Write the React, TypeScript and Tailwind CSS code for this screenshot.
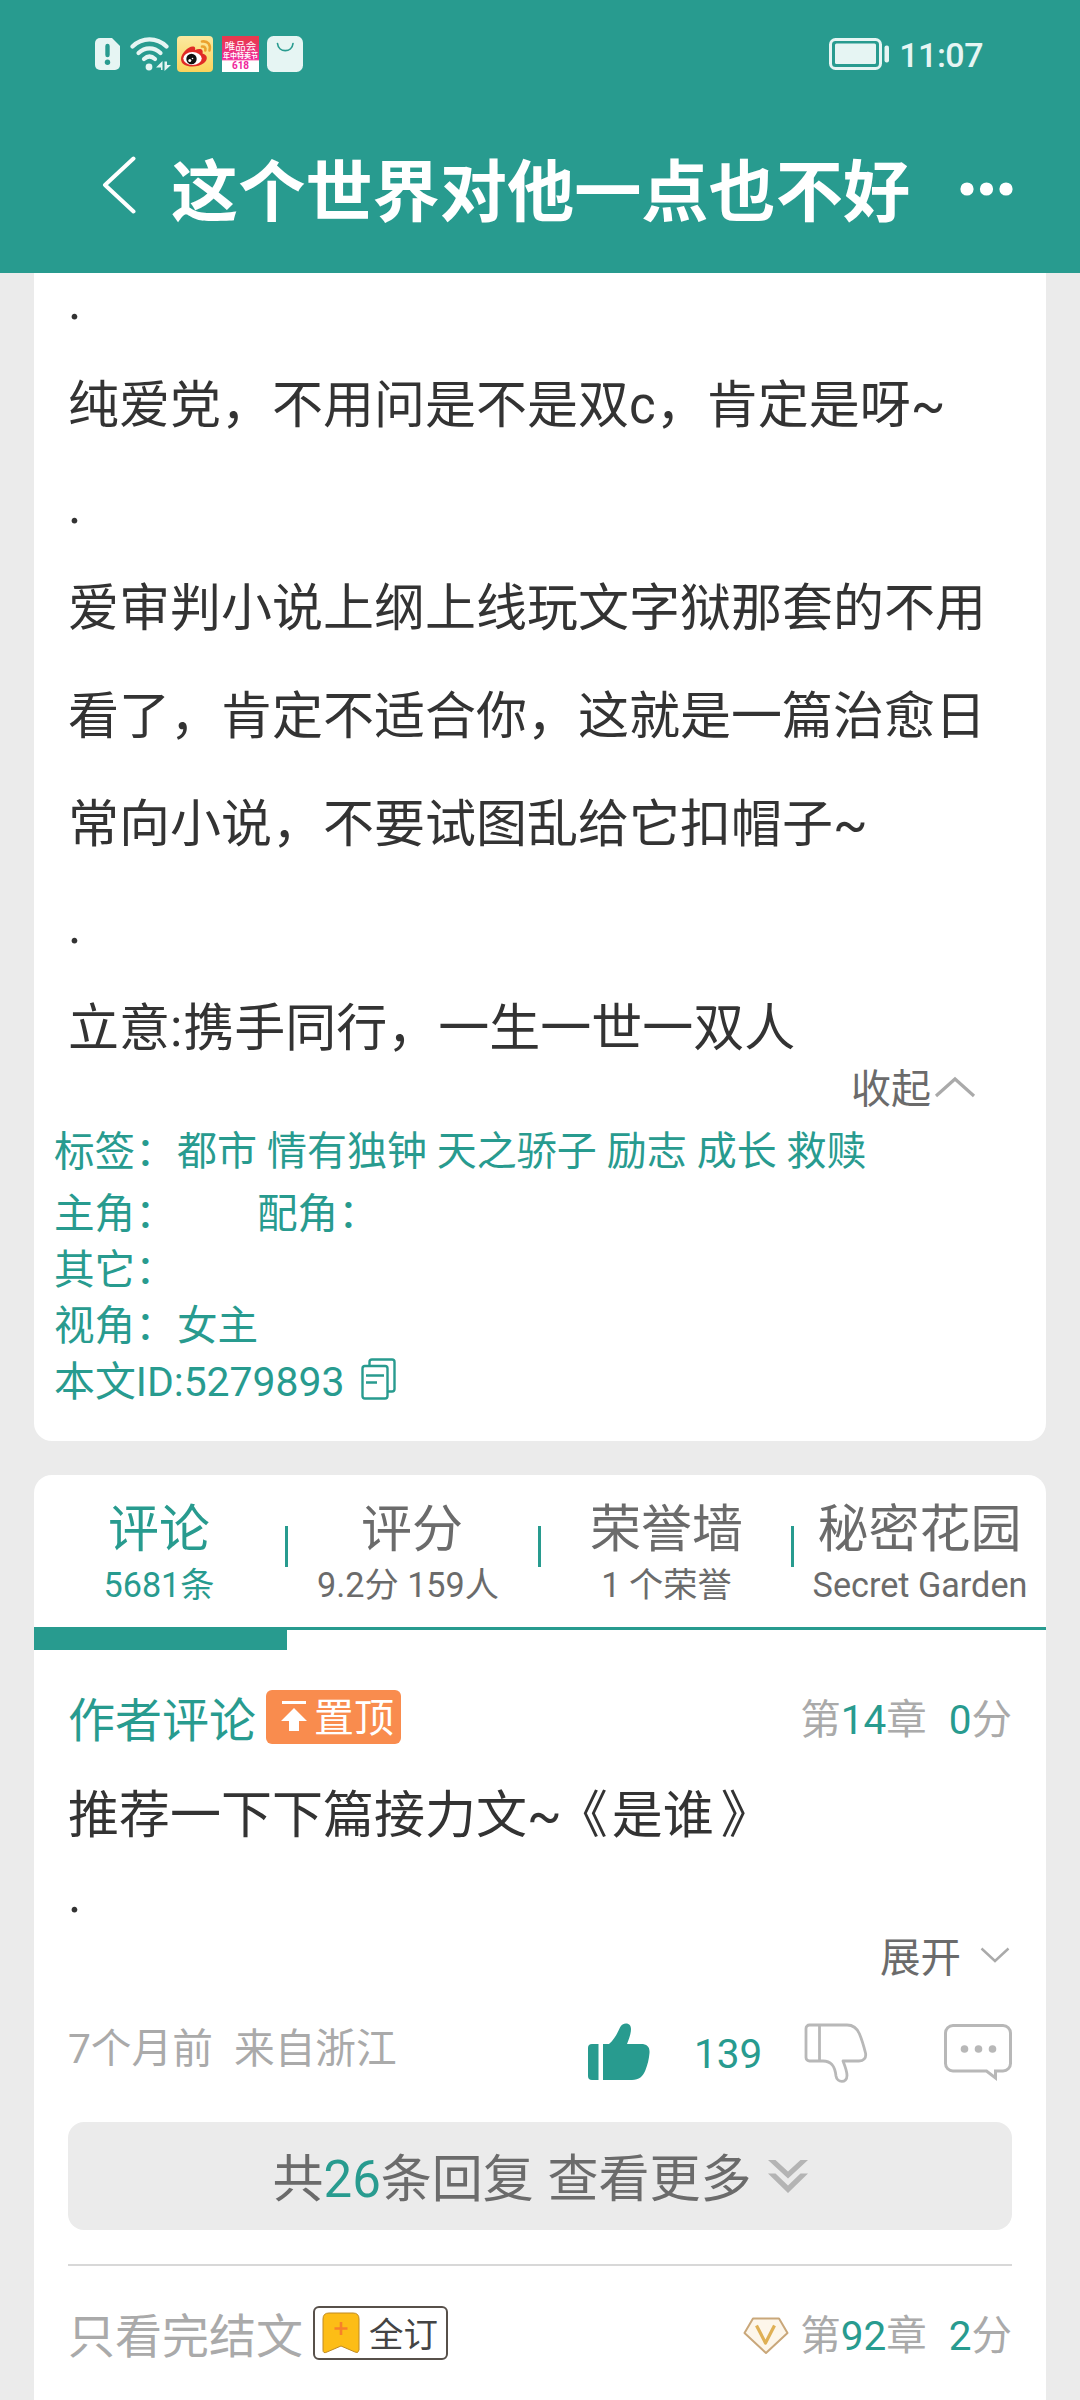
import React from 'react';

const TEAL = '#289b8f';

function StatusBar() {
  return (
    <div className="flex h-[108px] items-center pl-[95px] pr-[97px]">
      <svg width="25" height="32" viewBox="0 0 25 32" className="mb-0 block">
        <path d="M5 0H17L25 8V27a5 5 0 0 1-5 5H5a5 5 0 0 1-5-5V5a5 5 0 0 1 5-5Z" fill="#e6f5f3" />
        <path d="M12.5 8V17" stroke={TEAL} strokeWidth="4.4" strokeLinecap="round" />
        <circle cx="12.5" cy="24.3" r="2.7" fill={TEAL} />
      </svg>
      <svg width="42" height="35" viewBox="0 0 42 35" className="ml-[10px] block">
        <g fill="none" stroke="#e6f5f3" strokeWidth="4.2" strokeLinecap="round">
          <path d="M2.5 9.5C12 0 27 0 36.500 9.500" />
          <path d="M8.500 16C15 9.800 24 9.800 30.500 16" />
          <path d="M14 22C17.500 18.800 21.500 18.800 25 22" />
        </g>
        <circle cx="19" cy="30" r="3.400" fill="#e6f5f3" />
        <path d="M26 30.500L32.500 24V33H31V30.500ZM34.500 24.500V34L41 28H37V24.500Z" fill="#e6f5f3" />
      </svg>
      <svg width="36" height="36" viewBox="0 0 36 36" className="ml-[5px] block">
        <defs>
          <linearGradient id="wb" x1="0" y1="0" x2="0" y2="1">
            <stop offset="0" stopColor="#fbe9a0" />
            <stop offset="1" stopColor="#fbd35c" />
          </linearGradient>
        </defs>
        <rect width="36" height="36" rx="4" fill="url(#wb)" />
        <path d="M4 23C4 17 12 9.500 16.500 10.500C19 11 18 14 18 14C22 12 27 12.500 25.500 17.500C31 19 31 24 27 27C20 32.500 4 32 4 23Z" fill="#e02a26" />
        <ellipse cx="15.500" cy="22.500" rx="9.200" ry="6.500" fill="#fff" />
        <circle cx="14.500" cy="23" r="5.200" fill="#111" />
        <circle cx="12.800" cy="24.500" r="1.500" fill="#fff" />
        <circle cx="15.500" cy="22.500" r=".8" fill="#fff" />
        <g fill="none" stroke="#eba22e" strokeWidth="2.600" strokeLinecap="round">
          <path d="M25 5.500C31 4.500 34 9 32.500 14.500" />
          <path d="M25 10.500C27.800 10.200 29 12 28.300 14.500" />
        </g>
      </svg>
      <div className="ml-[9px] flex h-9 w-[37px] flex-col items-center overflow-hidden bg-gradient-to-b from-[#e8384f] from-10% via-[#f0269c] via-65% to-white to-70% whitespace-nowrap">
        <span className="mt-[5px] text-[10.500px] leading-[11px] text-white">唯品会</span>
        <span className="text-[7px] font-bold leading-[8px] text-white">年中特卖节</span>
        <span className="mt-[1px] text-[10px] font-bold leading-[10px] text-[#f0269c]">618</span>
      </div>
      <svg width="36" height="36" viewBox="0 0 36 36" className="ml-[8px] block">
        <rect width="36" height="36" rx="6.500" fill="#e6f5f3" />
        <path d="M10.500 7.500C11.500 17 25 17 26 7.500" fill="none" stroke={TEAL} strokeWidth="1.700" strokeLinecap="round" />
      </svg>
      <svg width="61" height="32" viewBox="0 0 61 32" className="ml-auto block">
        <rect x="1.500" y="1.500" width="50" height="29" rx="5" fill="none" stroke="#e6f5f3" strokeWidth="3" />
        <rect x="6" y="5.500" width="41" height="20.500" rx="1.500" fill="#e6f5f3" />
        <rect x="55.500" y="7.500" width="4.500" height="17" rx="2" fill="#e6f5f3" />
      </svg>
      <span className="ml-[9px] mt-[2px] text-[34px] leading-10 tracking-[-0.5px] text-[#e6f5f3] font-medium">11:07</span>
    </div>
  );
}

function Header() {
  return (
    <header className="h-[273px] bg-[#289b8f]">
      <StatusBar />
      <div className="flex h-[165px] items-start pl-[101px] pr-[66px]">
        <svg width="35" height="58" viewBox="0 0 35 58" className="mt-[48px] block">
          <path d="M32.500 2.500L4 29L32.500 55.500" fill="none" stroke="#fff" strokeWidth="4" strokeLinecap="round" strokeLinejoin="round" />
        </svg>
        <h1 className="ml-[35px] mt-[35px] text-[67.200px] font-bold leading-[100px] text-white">这个世界对他一点也不好</h1>
        <svg width="54" height="14" viewBox="0 0 54 14" className="ml-auto mt-[74px] block">
          <circle cx="7" cy="7" r="6.600" fill="#fff" />
          <circle cx="26.500" cy="7" r="6.600" fill="#fff" />
          <circle cx="46" cy="7" r="6.600" fill="#fff" />
        </svg>
      </div>
    </header>
  );
}

function Summary() {
  return (
    <section className="h-[1168px] rounded-b-[18px] bg-white">
      <div className="pl-[34px] text-[51px] leading-[108px] text-[#333]">
        <p className="leading-[57px]">.</p>
        <p className="mt-[22px]">纯爱党，不用问是不是双c，肯定是呀~</p>
        <p className="leading-[92px]">.</p>
        <p className="mt-[3px]">爱审判小说上纲上线玩文字狱那套的不用</p>
        <p>看了，肯定不适合你，这就是一篇治愈日</p>
        <p>常向小说，不要试图乱给它扣帽子~</p>
        <p className="leading-[94px]">.</p>
        <p className="mt-[2px]">立意:<span className="ml-[1px]">携手同行，一生一世一双人</span></p>
      </div>
      <div className="-mt-[20px] flex h-[54px] items-center justify-end pr-[70px]">
        <span className="text-[40px] leading-[54px] text-[#6b6b6b]">收起</span>
        <svg width="42" height="22" viewBox="0 0 42 22" className="ml-[3px] -mt-[6px] block">
          <path d="M2 20L21 3L40 20" fill="none" stroke="#aaa" strokeWidth="3.200" />
        </svg>
      </div>
      <div className="mt-[7px] pl-[20px] text-[40.600px] leading-[56px] text-[#289b8f]">
        <p className="flex">
          <span className="w-[123px]">标签：</span>
          <span className="text-[40px]">都市 情有独钟 天之骄子 励志 成长 救赎</span>
        </p>
        <p className="mt-[6px] flex">
          <span className="w-[203px]">主角：</span>
          <span>配角：</span>
        </p>
        <p>其它：</p>
        <p className="flex">
          <span className="w-[123px]">视角：</span>
          <span>女主</span>
        </p>
        <p className="flex items-center">
          <span className="text-[40.900px]">本文ID:5279893</span>
          <svg width="35" height="42" viewBox="0 0 35 42" className="-mt-[6px] ml-[16px] block" fill="none" stroke={TEAL} strokeWidth="2.400">
            <rect x="1.500" y="8" width="25" height="32.500" rx="2.500" />
            <path d="M8.500 7.500V4A2.500 2.500 0 0 1 11 1.500H31A2.500 2.500 0 0 1 33.500 4V31A2.500 2.500 0 0 1 31 33.500H27" />
            <path d="M5 17.500H23M5 24.500H16" />
          </svg>
        </p>
      </div>
    </section>
  );
}

const tabs = [
  { title: '评论', sub: '5681条', active: true, titleShift: '-ml-[3px]', subShift: '-ml-[3px]' },
  { title: '评分', sub: '9.2分 159人', active: false, titleShift: '-ml-[3px]', subShift: '-ml-[11px]' },
  { title: '荣誉墙', sub: '1 个荣誉', active: false, titleShift: 'ml-0', subShift: 'ml-0' },
  { title: '秘密花园', sub: 'Secret Garden', active: false, titleShift: 'ml-0', subShift: 'ml-[1px]' },
];

function Tabs() {
  return (
    <nav className="grid h-[155px] grid-cols-4 border-b-[3px] border-[#289b8f]">
      {tabs.map((t, i) => (
        <div key={t.title} className={t.active ? 'relative text-center text-[#289b8f]' : 'relative text-center text-[#6b6b6b]'}>
          <div className={t.titleShift}>
            <div className="mt-[23px] text-[51px] leading-[64px] whitespace-nowrap">{t.title}</div>
          </div>
          <div className={t.subShift}>
            <div className="mt-[2px] text-[34.200px] leading-[42px] whitespace-nowrap">{t.sub}</div>
          </div>
          {i < 3 && <span className="absolute top-[51px] -right-[1px] h-[41px] w-[3px] bg-[#289b8f]" />}
          {t.active && <span className="absolute left-0 -bottom-[23px] h-[23px] w-full bg-[#289b8f]" />}
        </div>
      ))}
    </nav>
  );
}

function Chapter({ chapter, score }: { chapter: string; score: string }) {
  return (
    <span className="text-[40.500px] leading-[54px] text-[#aaa] whitespace-nowrap">
      第<b className="font-normal text-[#289b8f]">{chapter}</b>章
      <b className="ml-[22px] font-normal text-[#289b8f]">{score}</b>分
    </span>
  );
}

function Comments() {
  return (
    <section className="mt-[34px] h-[925px] rounded-t-[18px] bg-white">
      <Tabs />
      <div className="px-[34px]">
        <div className="mt-[60px] flex h-[54px] items-center">
          <span className="mt-[8px] text-[47px] leading-[60px] text-[#289b8f]">作者评论</span>
          <span className="ml-[10px] flex h-[54px] w-[135px] items-center rounded-[6px] bg-[#f98c4e] pl-[15px] text-white">
            <svg width="26" height="32" viewBox="0 0 26 32" className="block shrink-0" fill="#fff">
              <path d="M1 0H25V3H1ZM13 7L26 20H18V30H8V20H0Z" />
            </svg>
            <span className="mt-[4px] ml-[7px] text-[40px] leading-[54px] whitespace-nowrap">置顶</span>
          </span>
          <span className="ml-auto mt-[5px]"><Chapter chapter="14" score="0" /></span>
        </div>
        <div className="mt-[18px] text-[51px] leading-[108px] text-[#333]">
          <p>推荐一下下篇接力文<span className="tracking-[-5px]">~《</span><span className="ml-[9px]">是谁</span><span className="ml-[7px]">》</span></p>
          <p className="leading-[50px]">.</p>
        </div>
        <div className="mt-[11px] flex h-[54px] items-center justify-end pr-[2px]">
          <span className="text-[40.500px] leading-[54px] text-[#6b6b6b]">展开</span>
          <svg width="30" height="16" viewBox="0 0 30 16" className="-mt-[6px] ml-[19px] block">
            <path d="M1.500 1.500L15 14L28.500 1.500" fill="none" stroke="#aaa" strokeWidth="2.400" />
          </svg>
        </div>
        <div className="mt-[34px] flex h-[66px] items-center">
          <span className="-mt-[7px] text-[40.700px] leading-[54px] text-[#aaa] whitespace-nowrap">7个月前<span className="ml-[21px]">来自浙江</span></span>
          <svg width="62" height="57" viewBox="0 0 62 57" className="-mt-[1px] ml-auto block" fill={TEAL}>
            <path d="M4 21H10.500V57H4A4 4 0 0 1 0 53V25A4 4 0 0 1 4 21Z" />
            <path d="M15 57V21H21C26 17 29 11 32 4.500C34.500-1 43-1 43 6C43 10.500 41 16 39 21H53C59 21 62 24 61.500 30C61 36 59.500 42 57.500 47C55 53.500 51 57 44 57Z" />
          </svg>
          <span className="mt-[4px] ml-[44px] w-[70px] text-[40.500px] leading-[54px] text-[#289b8f]">139</span>
          <svg width="64" height="60" viewBox="0 0 64 60" className="ml-[40px] mt-[1px] block" fill="none" stroke="#b8b8b8" strokeWidth="2.800" strokeLinejoin="round">
            <path d="M5.500 2H43C49 2 53 5 55.500 11C58 17 60 24 61.500 30C62.500 35 59.500 38 55 38H39C41 43 43 49 43 52.500C43 60.500 33 60 32 53C31 44 28 38 19 38H5.500A3.500 3.500 0 0 1 2 34.500V5.500A3.500 3.500 0 0 1 5.500 2Z" />
            <path d="M15.500 2V38" />
          </svg>
          <svg width="68" height="58" viewBox="0 0 68 58" className="ml-[76px] mt-[2px] block">
            <path d="M9 1.500H59A7.500 7.500 0 0 1 66.500 9V39.500A7.500 7.500 0 0 1 59 47H51.500V54L42.500 47H9A7.500 7.500 0 0 1 1.500 39.500V9A7.500 7.500 0 0 1 9 1.500Z" fill="none" stroke="#b8b8b8" strokeWidth="3" />
            <g fill="#b8b8b8">
              <circle cx="20.500" cy="25" r="3.800" />
              <circle cx="34.500" cy="25" r="3.800" />
              <circle cx="48.500" cy="25" r="3.800" />
            </g>
          </svg>
        </div>
        <div className="mt-[37px] flex h-[108px] items-center justify-center rounded-[16px] bg-[#ebebeb]">
          <span className="mt-[7px] text-[51px] leading-[80px] text-[#6b6b6b] whitespace-nowrap">
            共<b className="font-normal text-[#289b8f]">26</b>条回复 <span className="ml-[1px]">查看更多</span>
          </span>
          <svg width="40" height="33" viewBox="0 0 40 33" className="ml-[16px] block" fill="#b4b4b4">
            <path d="M0 0H7.500L20 11.500L32.500 0H40L20 18.500Z" />
            <path d="M0 13.500H7.500L20 25.500L32.500 13.500H40L20 33Z" />
          </svg>
        </div>
        <div className="mt-[34px] h-[2px] bg-[#d8d8d8]" />
        <div className="mt-[40px] flex h-[54px] items-center">
          <span className="mt-[8px] text-[47px] leading-[60px] text-[#aaa] whitespace-nowrap">只看完结文</span>
          <span className="ml-[10px] flex h-[54px] w-[135px] items-center rounded-[6px] border-2 border-[#57504a] pl-[7px]">
            <svg width="38" height="42" viewBox="0 0 38 42" className="block shrink-0">
              <path d="M7 1H31Q37 1 37 7V38Q36 42 33 40L19 34L5 40Q1 42 1 38V7Q1 1 7 1Z" fill="#fdbd16" stroke="#c08a20" />
              <path d="M19 10V23M12.500 16.500H25.500" stroke="#f7812a" strokeWidth="2.600" />
            </svg>
            <span className="mt-[3px] ml-[9px] text-[34.500px] leading-[48px] text-[#444] whitespace-nowrap">全订</span>
          </span>
          <svg width="46" height="38" viewBox="0 0 46 38" className="ml-auto mr-[11px] mt-[5px] block" fill="none" strokeLinejoin="round">
            <path d="M10 1.500H36L44.500 16L23 36L1.500 16Z" fill="#fdf6ea" stroke="#c9a77a" strokeWidth="2" />
            <path d="M13.500 8.500L22.500 26L31.500 8.500" stroke="#dfb055" strokeWidth="3.200" />
          </svg>
          <span className="mt-[5px]"><Chapter chapter="92" score="2" /></span>
        </div>
      </div>
    </section>
  );
}

export default function App() {
  return (
    <div lang="zh-CN" className="h-[2400px] w-[1080px] overflow-hidden bg-[#ebebeb] font-[Roboto,'Noto_Sans_CJK_SC',sans-serif]">
      <Header />
      <main className="px-[34px]">
        <Summary />
        <Comments />
      </main>
    </div>
  );
}
